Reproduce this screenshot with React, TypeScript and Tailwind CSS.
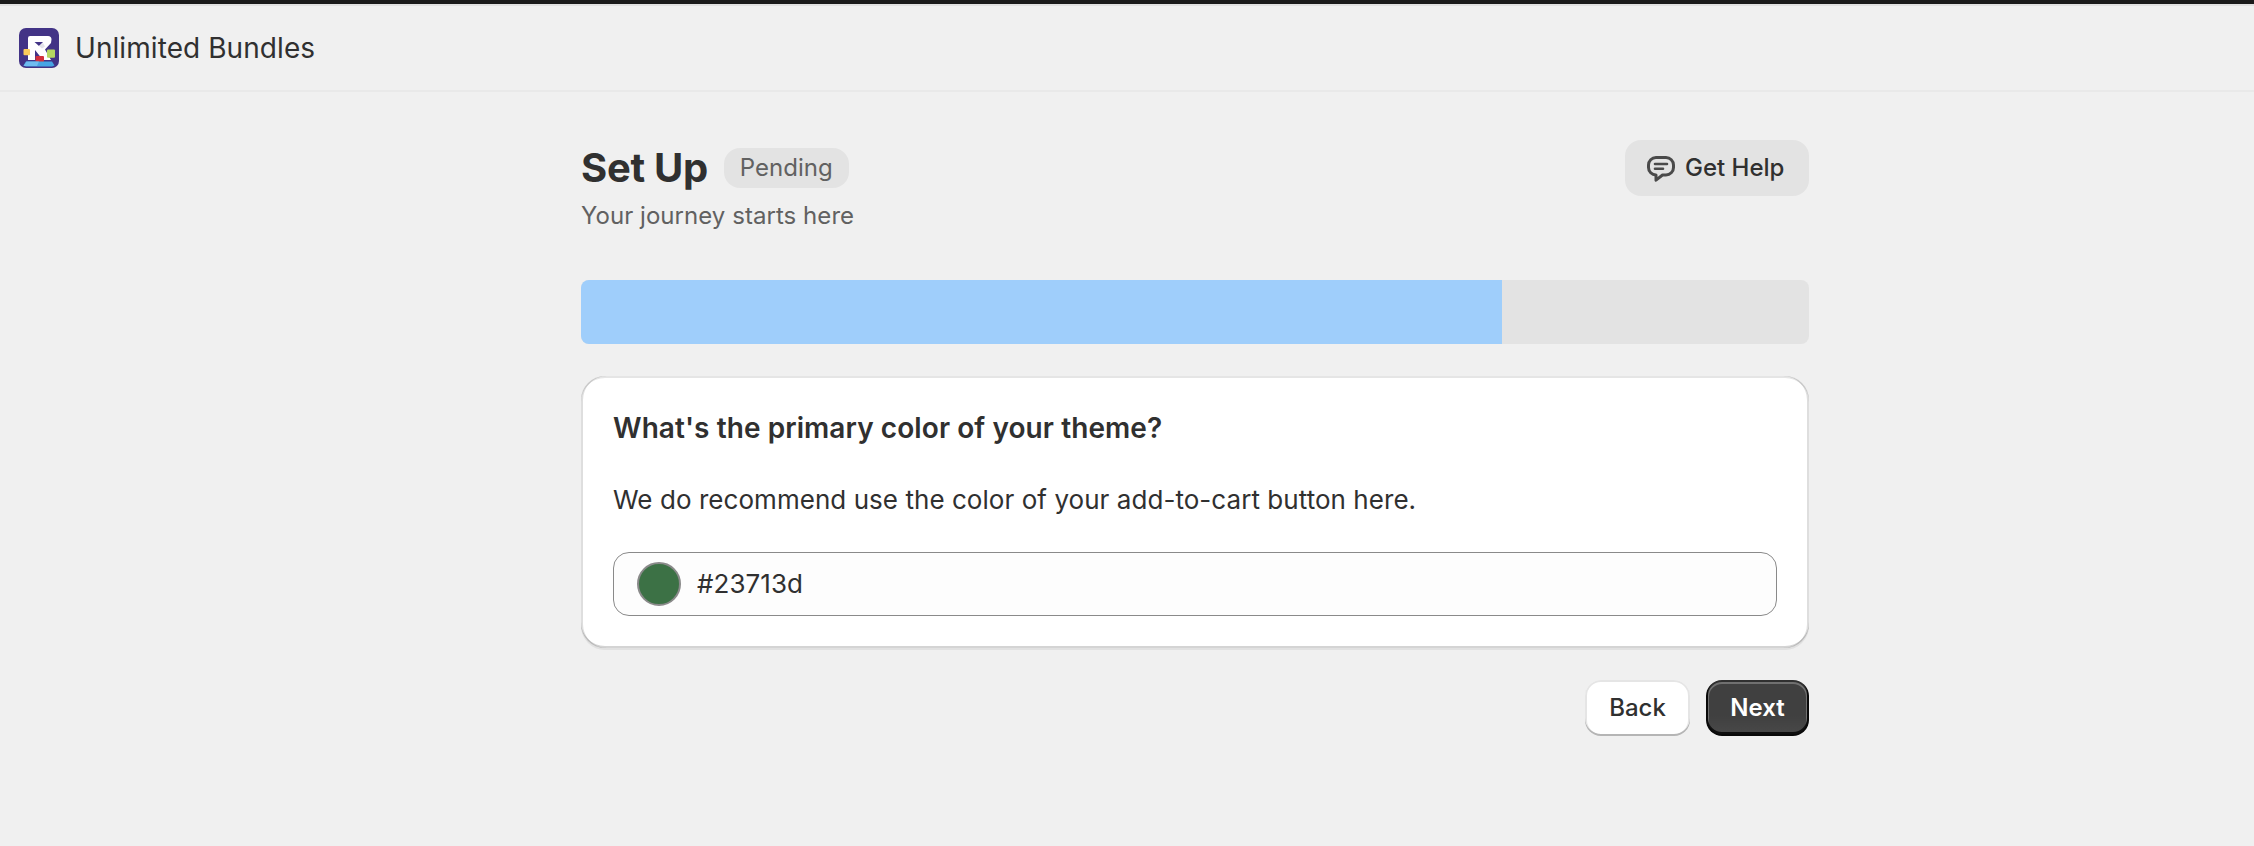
import React, { useState } from "react";

const PROGRESS = 75;

const AppLogo = () => (
  <svg viewBox="0 0 40 40" className="size-10 shrink-0">
    <defs>
      <clipPath id="logo-clip">
        <rect width="40" height="40" rx="7" />
      </clipPath>
    </defs>
    <g clipPath="url(#logo-clip)">
      <rect width="40" height="40" fill="#423386" />
      <path
        d="M9 10Q9 8 11 8H29Q32.500 8 32.500 11.500L32 15L26 21.500L32 32H24L16 22V32H9Z"
        fill="#fff"
      />
      <path d="M15.500 14H24L20 18Z" fill="#423386" />
      <path d="M20 18L24 15L26 18.500L23 20.500Z" fill="#e3e3ea" />
      <rect x="4.500" y="21" width="6.500" height="6.250" rx="1" fill="#fbcb5b" />
      <rect x="28" y="21.500" width="8" height="8.250" rx="1" fill="#b5d761" />
      <rect x="16.500" y="28" width="8.500" height="6" rx="1" fill="#d2303b" />
      <path d="M7 33.500H33L35.500 37.500L33 38.500H7L4.500 37.500Z" fill="#47a5e4" />
      <path d="M7.500 33.500H20L18 38H4.500Z" fill="#6fbcf0" />
    </g>
  </svg>
);

const ChatIcon = () => (
  <svg
    viewBox="0 0 20 20"
    className="size-10 shrink-0"
    fill="none"
    stroke="#4a4a4a"
    strokeWidth="1.5"
    strokeLinecap="round"
    strokeLinejoin="round"
  >
    <path d="M7.500 4.750h5a3.750 3.750 0 0 1 3.750 3.750v1.250a3.750 3.750 0 0 1-3.750 3.750h-1.750l-3.250 2.600v-2.600a3.750 3.750 0 0 1-3.750-3.750v-1.250a3.750 3.750 0 0 1 3.750-3.750Z" />
    <path d="M7 8h6M7 10.400h4" strokeWidth="1.300" />
  </svg>
);

const App = () => {
  const [color, setColor] = useState("#23713d");

  const handleColorChange = (e: React.ChangeEvent<HTMLInputElement>) => {
    setColor(e.target.value);
  };

  return (
    <div className="min-h-screen bg-[#f0f0f0] font-['Inter',sans-serif] text-[#303030]">
      <header className="flex h-[92px] items-center gap-4 border-t-4 border-b-2 border-t-[#1a1a1a] border-b-[#e9e9e9] pt-[2px] pl-[19px] shadow-[inset_0_2px_0_#e1e1e1]">
        <AppLogo />
        <span className="text-[28px] leading-10 tracking-[0.07px]">
          Unlimited Bundles
        </span>
      </header>

      <main className="ml-[581px] w-[1228px] pt-12">
        <div className="flex h-[92px] items-start justify-between">
          <div>
            <div className="flex h-14 items-center gap-4">
              <h1 className="text-[40px] leading-[48px] font-bold tracking-[-0.3px]">
                Set Up
              </h1>
              <span className="rounded-2xl bg-[#e3e3e3] px-4 text-2xl leading-10 text-[#616161]">
                Pending
              </span>
            </div>
            <p className="text-2xl leading-10 tracking-[0.05px] text-[#616161]">
              Your journey starts here
            </p>
          </div>
          <button className="flex h-14 w-[184px] items-center gap-1 rounded-2xl bg-[#e3e3e3] pl-4 text-2xl font-medium whitespace-nowrap">
            <ChatIcon />
            Get Help
          </button>
        </div>

        <div className="mt-12 h-16 overflow-hidden rounded-lg bg-[#e3e3e3]">
          <div
            className="h-full bg-[#9fcefb]"
            style={{ width: `${PROGRESS}%` }}
          />
        </div>

        <section className="mt-8 h-[272px] rounded-3xl bg-white px-8 pt-8 shadow-[0_2px_0_#1a1a1a12,inset_2px_0_0_#00000021,inset_-2px_0_0_#00000021,inset_0_-2px_0_#0000002b,inset_0_2px_0_#cccccc80]">
          <h2 className="text-[28px] leading-10 font-semibold tracking-[0.08px]">
            What's the primary color of your theme?
          </h2>
          <p className="mt-8 text-[26px] leading-10 tracking-[0.05px]">
            We do recommend use the color of your add-to-cart button here.
          </p>
          <div className="mt-8 flex h-16 items-center gap-4 rounded-2xl border border-[#8a8a8a] bg-[#fdfdfd] pl-[23px]">
            <span className="size-11 shrink-0 rounded-full border-2 border-[#8a8a8a] bg-[#3c7145]" />
            <input
              value={color}
              onChange={handleColorChange}
              className="w-full bg-transparent pb-0.5 text-[26px] tracking-[0.05px] outline-none"
            />
          </div>
        </section>

        <div className="mt-8 flex justify-end gap-4">
          <button className="h-14 w-[105px] rounded-2xl bg-white text-2xl font-medium shadow-[inset_0_-2px_0_#b5b5b5,inset_0_0_0_2px_#0000001a,inset_0_1px_0_3px_#fff]">
            Back
          </button>
          <button className="h-14 w-[103px] rounded-2xl bg-[#404040] bg-linear-to-b from-transparent from-[63%] to-white/5 text-2xl font-semibold text-white shadow-[inset_0_-2px_0_2px_#000000cc,inset_0_0_0_2px_#303030,inset_0_1px_0_3px_#ffffff40]">
            Next
          </button>
        </div>
      </main>
    </div>
  );
};

export default App;
